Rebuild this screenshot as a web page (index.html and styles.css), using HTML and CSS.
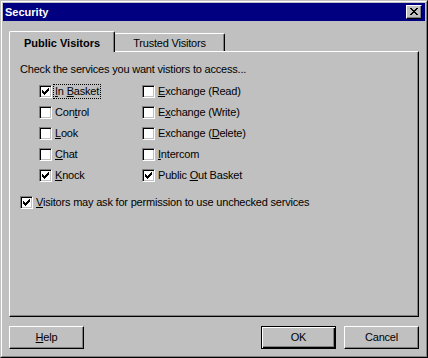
FILE: index.html
```html
<!DOCTYPE html>
<html lang="en">
<head>
  <title>Security</title>
  <link rel="stylesheet" href="styles.css">
</head>
<body>
  <div class="window">
    <div class="frame">
      <div class="titlebar">
        <span class="title">Security</span>
        <div class="close">
          <svg width="8" height="7" viewBox="0 0 8 7" shape-rendering="crispEdges">
            <path d="M0 0h2v1h-2z M6 0h2v1h-2z M1 1h2v1h-2z M5 1h2v1h-2z M2 2h4v1h-4z M3 3h2v1h-2z M2 4h4v1h-4z M1 5h2v1h-2z M5 5h2v1h-2z M0 6h2v1h-2z M6 6h2v1h-2z" fill="#000"/>
          </svg>
        </div>
      </div>

      <div class="content">
        <div class="tabs">
          <div class="tab tab-active">Public Visitors</div>
          <div class="tab">Trusted Visitors</div>
        </div>

        <div class="panel">
          <p class="intro">Check the services you want vistiors to access...</p>

          <div class="check-grid">
            <div class="check"><span class="box checked"></span><span class="label focus"><u>I</u>n <u>B</u>asket</span></div>
            <div class="check"><span class="box"></span><span class="label"><u>E</u>xchange (Read)</span></div>
            <div class="check"><span class="box"></span><span class="label">Con<u>t</u>rol</span></div>
            <div class="check"><span class="box"></span><span class="label">E<u>x</u>change (Write)</span></div>
            <div class="check"><span class="box"></span><span class="label"><u>L</u>ook</span></div>
            <div class="check"><span class="box"></span><span class="label">Exchange (<u>D</u>elete)</span></div>
            <div class="check"><span class="box"></span><span class="label"><u>C</u>hat</span></div>
            <div class="check"><span class="box"></span><span class="label"><u>I</u>ntercom</span></div>
            <div class="check"><span class="box checked"></span><span class="label"><u>K</u>nock</span></div>
            <div class="check"><span class="box checked"></span><span class="label">Public <u>O</u>ut Basket</span></div>
          </div>

          <div class="check ask">
            <span class="box checked"></span><span class="label"><u>V</u>isitors may ask for permission to use unchecked services</span>
          </div>
        </div>

        <div class="buttons">
          <div class="btn"><u>H</u>elp</div>
          <div class="spacer"></div>
          <div class="btn btn-default">OK</div>
          <div class="btn">Cancel</div>
        </div>
      </div>
    </div>
  </div>
</body>
</html>
```

FILE: styles.css
```css
body {
  margin: 0;
  background-color: #c0c0c0;
  font-family: "Liberation Sans", Arial, sans-serif;
  font-size: 11px;
  line-height: 13px;
  letter-spacing: -0.2px;
  color: #000;
}
.window {
  width: 428px;
  height: 358px;
  box-sizing: border-box;
  border: 1px solid;
  border-color: #c0c0c0 #000 #000 #c0c0c0;
  background-color: #c0c0c0;
}
.frame {
  height: 100%;
  box-sizing: border-box;
  border: 1px solid;
  border-color: #fff #808080 #808080 #fff;
  padding: 1px;
  display: flex;
  flex-direction: column;
}
.titlebar {
  height: 18px;
  flex: none;
  background-color: #000080;
  color: #fff;
  display: flex;
  align-items: center;
  justify-content: space-between;
  padding: 0 3px 0 2px;
}
.title {
  font-weight: bold;
  letter-spacing: 0;
}
.close {
  width: 16px;
  height: 14px;
  box-sizing: border-box;
  background-color: #c0c0c0;
  border: 1px solid;
  border-color: #fff #000 #000 #fff;
  box-shadow: inset -1px -1px #808080;
  display: flex;
  padding: 2px 0 0 3px;
}
.content {
  flex: 1;
  display: flex;
  flex-direction: column;
  padding: 10px 6px 6px 6px;
}
.tabs {
  display: flex;
  height: 20px;
  flex: none;
  position: relative;
  z-index: 1;
}
.tab {
  box-sizing: border-box;
  height: 18px;
  margin-top: 2px;
  width: 110px;
  text-align: center;
  padding-top: 3px;
  background-color: #c0c0c0;
  border-top: 1px solid #fff;
  border-right: 1px solid #000;
  border-radius: 0 2px 0 0;
  box-shadow: inset -1px 0 #808080;
}
.tab-active {
  height: 21px;
  margin-top: 0;
  width: 106px;
  padding-top: 5px;
  font-weight: bold;
  letter-spacing: 0;
  border-left: 1px solid #fff;
  border-radius: 2px 2px 0 0;
}
.panel {
  flex: 1;
  border: 1px solid;
  border-color: #fff #000 #000 #fff;
  box-shadow: inset -1px -1px #808080;
  padding: 11px 10px 0 10px;
}
.intro {
  margin: 0;
}
.check-grid {
  display: grid;
  grid-template-columns: 103px auto;
  grid-auto-rows: 21px;
  margin-top: 5px;
  padding-left: 19px;
}
.check {
  display: flex;
  align-items: center;
}
.ask {
  height: 21px;
  margin-top: 6px;
}
.box {
  width: 13px;
  height: 13px;
  box-sizing: border-box;
  flex: none;
  background-color: #fff;
  border: 1px solid;
  border-color: #808080 #fff #fff #808080;
  box-shadow: inset 1px 1px #000, inset -1px -1px #c0c0c0;
  margin-right: 1px;
}
.checked {
  background-image: url("data:image/svg+xml,%3Csvg xmlns='http://www.w3.org/2000/svg' width='7' height='7' viewBox='0 0 7 7' shape-rendering='crispEdges'%3E%3Cpath d='M0 2h1v3h-1z M1 3h1v3h-1z M2 4h1v3h-1z M3 3h1v3h-1z M4 2h1v3h-1z M5 1h1v3h-1z M6 0h1v3h-1z' fill='%23000'/%3E%3C/svg%3E");
  background-repeat: no-repeat;
  background-position: 2px 2px;
}
.label {
  border: 1px dotted transparent;
  padding: 0 1px;
  white-space: nowrap;
}
.focus {
  border-color: #000;
}
.buttons {
  display: flex;
  gap: 8px;
  margin-top: 9px;
  flex: none;
}
.spacer {
  flex: 1;
}
.btn {
  width: 75px;
  height: 23px;
  box-sizing: border-box;
  display: flex;
  align-items: center;
  justify-content: center;
  border: 1px solid;
  border-color: #fff #000 #000 #fff;
  box-shadow: inset -1px -1px #808080;
}
.btn-default {
  border-color: #000;
  box-shadow: inset 1px 1px #fff, inset -1px -1px #000, inset -2px -2px #808080;
}
```
